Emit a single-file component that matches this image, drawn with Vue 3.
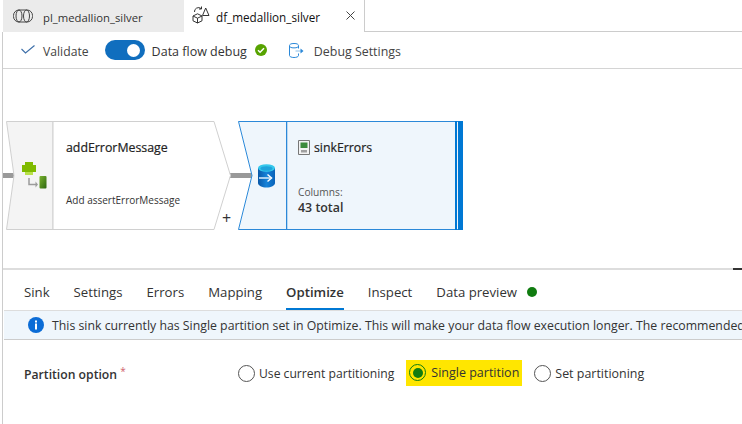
<script setup>
const tabs = [
  { name: 'Sink', active: false },
  { name: 'Settings', active: false },
  { name: 'Errors', active: false },
  { name: 'Mapping', active: false },
  { name: 'Optimize', active: true },
  { name: 'Inspect', active: false }
]
</script>

<template>
  <div class="page">
    <header class="tabbar">
      <div class="tab tab-off">
        <svg class="ticon" width="20" height="14" viewBox="0 0 20 14" fill="none" stroke="#444" stroke-width="1">
          <rect x=".5" y="1" width="19" height="12" rx="5.500" />
          <ellipse cx="6" cy="7" rx="3" ry="6" />
          <ellipse cx="13.500" cy="7" rx="3" ry="6" />
        </svg>
        <span class="tname name-off">pl_medallion_silver</span>
      </div>
      <div class="tab tab-on">
        <svg class="ticon" width="18" height="18" viewBox="0 0 18 18" fill="none" stroke="#333" stroke-width="1">
          <path d="M1 10l4.500-2.200 4.500 2.200v4.800l-4.500 2.200-4.500-2.200zM1 10l4.500 2.200 4.500-2.200M5.500 12.200v4.800" />
          <path d="M10.500 9.500l3.200-7.500 3.300 7.500z" />
          <path d="M2.500 6a4 4 0 0 1 6.500-3.500M9.500 .5v2.500h-2.500" />
        </svg>
        <span class="tname name-on">df_medallion_silver</span>
        <svg class="close" width="9" height="9" viewBox="0 0 9 9" stroke="#444" stroke-width="1">
          <path d="M.5.500l8 8M8.500 .5l-8 8" />
        </svg>
      </div>
      <div class="tab-rest"></div>
    </header>

    <div class="body">
      <div class="toolbar">
        <svg class="tool-check" width="14" height="9" viewBox="0 0 14 9" fill="none" stroke="#3c6ea8" stroke-width="1.100">
          <path d="M.5 4l4 4 9-7.500" />
        </svg>
        <span class="tool-txt validate">Validate</span>
        <span class="switch"><span class="knob"></span></span>
        <span class="tool-txt debug">Data flow debug</span>
        <svg class="ok" width="12" height="12" viewBox="0 0 12 12">
          <circle cx="6" cy="6" r="6" fill="#57a300" />
          <path d="M3 6.200l2.100 2 3.900-4" fill="none" stroke="#fff" stroke-width="1.500" />
        </svg>
        <svg class="dbicon" width="15" height="15" viewBox="0 0 15 15" fill="none" stroke="#2b88d8" stroke-width="1">
          <path d="M.5 3v9.500c0 1.200 2 2 4.500 2s4.500-.8 4.500-2v-2M9.500 5.500V3" />
          <ellipse cx="5" cy="2.700" rx="4.500" ry="2.200" />
          <path d="M6.500 8h6" stroke="#8cc0ea" />
          <path d="M11.500 5.500l3 2.500-3 2.500z" fill="#2b88d8" stroke="none" />
        </svg>
        <span class="tool-txt settings">Debug Settings</span>
      </div>

      <div class="canvas">
        <div class="link link-left"></div>
        <div class="link link-mid"></div>
        <svg class="node-svg node-a" width="226" height="109" viewBox="0 0 226 109">
          <path d="M.5.500H47V108.500H.5L8 54.500z" fill="#f4f4f4" stroke="#d0d0d0" />
          <path d="M47 .500H208L224.500 54.500 208 108.500H47z" fill="#fff" stroke="#d0d0d0" />
          <path d="M19 41h8v3h3v7h-3v3h-8v-3h-3v-7h3z" fill="#7fba00" />
          <path d="M19 51h8v3h-8z" fill="#b8e04a" />
          <path d="M23 57v6.500h7" fill="none" stroke="#9b9b9b" stroke-width="1.500" />
          <path d="M29.500 60.500l2.500 3-2.500 3z" fill="#9b9b9b" />
          <rect x="33.500" y="55" width="7" height="12.500" rx="1" fill="url(#barg)" />
          <defs>
            <linearGradient id="barg" x1="0" y1="0" x2="1" y2="1">
              <stop offset="0" stop-color="#7ab32e" />
              <stop offset="1" stop-color="#2c6510" />
            </linearGradient>
            <linearGradient id="dbg" x1="0" y1="0" x2="1" y2="0">
              <stop offset="0" stop-color="#0a58a8" />
              <stop offset=".5" stop-color="#1582d8" />
              <stop offset="1" stop-color="#0a62b8" />
            </linearGradient>
          </defs>
        </svg>
        <div class="node-label a-title">addErrorMessage</div>
        <div class="node-label a-sub">Add assertErrorMessage</div>
        <div class="plus">+</div>

        <svg class="node-svg node-b" width="226" height="109" viewBox="0 0 226 109">
          <path d="M48.500 .500H.5L14 54.500.5 108.500H48.500z" fill="#eff6fc" stroke="#2b88d8" />
          <rect x="48.500" y=".5" width="174" height="108" fill="#eff6fc" stroke="#2b88d8" />
          <path d="M49.500 1V108" stroke="#b9d8f2" stroke-width="1" />
          <rect x="217" y="0" width="2" height="109" fill="#0078d4" />
          <rect x="220" y="0" width="5" height="109" fill="#0078d4" />
          <path d="M20 47v15c0 2.500 4 4.500 8.500 4.500s8.500-2 8.500-4.500V47z" fill="url(#dbg)" />
          <ellipse cx="28.500" cy="47" rx="8.500" ry="3.800" fill="#35c8ec" />
          <ellipse cx="28.500" cy="47.500" rx="6" ry="2.300" fill="#1ea4dc" />
          <path d="M21 57h11" fill="none" stroke="#cfe6f8" stroke-width="1.600" />
          <path d="M29.500 53.500l4 3.500-4 3.500" fill="none" stroke="#fff" stroke-width="1.500" />
        </svg>
        <svg class="csv" width="12" height="15" viewBox="0 0 12 15">
          <path d="M.5.500h11v14H.5z" fill="#f3f3f3" stroke="#777" />
          <rect x="2.500" y="2.500" width="7" height="5.500" fill="#3d8b3d" />
          <rect x="3" y="10" width="6" height="2.500" fill="#a0a0a0" />
        </svg>
        <div class="node-label b-title">sinkErrors</div>
        <div class="node-label b-cols">Columns:</div>
        <div class="node-label b-total">43 total</div>
      </div>

      <div class="panel">
        <nav class="ptabs">
          <span v-for="t in tabs" :key="t.name" class="ptab" :class="{ active: t.active }">{{ t.name }}</span>
          <span class="ptab preview">Data preview<i class="dot"></i></span>
        </nav>
        <div class="banner">
          <svg class="info" width="16" height="16" viewBox="0 0 16 16">
            <circle cx="8" cy="8" r="8" fill="#0b6cd6" />
            <rect x="7" y="6.500" width="2" height="6" fill="#fff" />
            <rect x="7" y="3.500" width="2" height="2" fill="#fff" />
          </svg>
          <span class="btxt">This sink currently has Single partition set in Optimize. This will make your data flow execution longer. The recommended</span>
        </div>
        <div class="field">
          <label class="flabel">Partition option <em>*</em></label>
          <div class="radios">
            <span class="radio r1"><i class="circle"></i>Use current partitioning</span>
            <span class="radio r2"><i class="circle on"></i>Single partition</span>
            <span class="radio r3"><i class="circle"></i>Set partitioning</span>
          </div>
        </div>
      </div>
    </div>
  </div>
</template>

<style>
html, body { margin: 0; padding: 0; overflow: hidden; background: #fff; }
</style>

<style scoped>
.page {
  width: 742px;
  height: 424px;
  overflow: hidden;
  font-family: "Open Sans", "Noto Sans", sans-serif;
  font-size: 13px;
  color: #333;
  background: #fff;
}
.tabbar { display: flex; height: 32px; }
.tab { display: flex; align-items: center; box-sizing: border-box; height: 32px; }
.tab-off { width: 184px; background: #ebebeb; padding-left: 10px; border-left: 3px solid #fff; }
.tab-on { width: 181px; padding-left: 8px; border-right: 1px solid #ccc; position: relative; }
.tab-rest { flex: 1; border-bottom: 1px solid #ccc; }
.ticon { flex: none; margin-right: 10px; }
.tab-on .ticon { margin-right: 6px; margin-top: -3px; }
.tname { font-size: 11.300px; color: #222; margin-top: 2px; }
.name-off { color: #333; }
.name-on { font-size: 11.700px; font-weight: 500; color: #111; }
.close { position: absolute; right: 9px; top: 11px; }
.body { margin-left: 2px; border-left: 1px solid #ccc; height: 392px; }
.toolbar { display: flex; align-items: center; height: 36px; border-bottom: 1px solid #d4d4d4; padding-left: 18px; }
.tool-check { margin-right: 8px; margin-top: -2px; flex: none; }
.tool-txt { font-size: 12.500px; color: #444; margin-top: 2px; }
.validate { font-size: 12.200px; margin-right: 16px; }
.switch { width: 40px; height: 20px; border-radius: 10px; background: #106ebe; position: relative; margin-right: 7px; flex: none; }
.knob { position: absolute; right: 5px; top: 3.500px; width: 13px; height: 13px; border-radius: 50%; background: #fff; }
.debug { color: #333; }
.ok { margin-left: 8px; margin-right: 22px; flex: none; }
.dbicon { margin-right: 10px; flex: none; }
.settings { font-size: 12.400px; }
.canvas { position: relative; height: 199px; border-bottom: 2px solid #ddd; }
.canvas::after { content: ""; position: absolute; right: 0; bottom: -2px; width: 9px; height: 2px; background: #333; }
.link { position: absolute; height: 5px; background: #999; top: 104px; }
.link-left { left: 0; width: 15px; }
.link-mid { left: 225px; width: 28px; }
.node-svg { position: absolute; }
.node-a { left: 3px; top: 52px; }
.node-b { left: 235px; top: 52px; }
.node-label { position: absolute; white-space: nowrap; }
.a-title { left: 63px; top: 70px; font-size: 12.350px; color: #222; -webkit-text-stroke: 0.2px #222; }
.a-sub { left: 63px; top: 124px; font-size: 10px; color: #333; }
.plus { position: absolute; left: 219px; top: 138px; font-size: 16px; color: #333; }
.csv { position: absolute; left: 295px; top: 71px; }
.b-title { left: 311px; top: 70px; font-size: 12.300px; color: #222; -webkit-text-stroke: 0.2px #222; }
.b-cols { left: 295px; top: 116px; font-size: 10.200px; color: #555; }
.b-total { left: 295px; top: 130px; font-size: 12.400px; font-weight: 600; }
.ptabs { display: flex; height: 40px; box-sizing: border-box; padding-left: 21px; gap: 24px; }
.ptab { display: flex; align-items: center; font-size: 13.200px; color: #333; border-bottom: 2px solid transparent; padding-top: 5px; height: 40px; box-sizing: border-box; }
.ptab.active { font-weight: 600; border-bottom-color: #0078d4; }
.dot { display: inline-block; width: 10px; height: 10px; border-radius: 50%; background: #107c10; margin-left: 10px; }
.banner { display: flex; align-items: center; height: 30px; box-sizing: border-box; margin-left: 1px; padding-left: 24px; background: #eff6fc; border-top: 1px solid #ddd; border-bottom: 1px solid #ccc; white-space: nowrap; overflow: hidden; }
.info { flex: none; }
.btxt { font-size: 12.300px; margin-left: 8px; color: #333; }
.field { display: flex; align-items: center; padding-left: 21px; height: 66px; }
.flabel { font-size: 12.200px; font-weight: 600; width: 214px; flex: none; }
.flabel em { color: #d0606c; font-style: normal; font-weight: 400; font-size: 10px; vertical-align: 4px; }
.radios { display: flex; align-items: center; }
.radio { display: flex; align-items: center; font-size: 12.150px; color: #333; }
.circle { width: 15px; height: 15px; border: 1px solid #555; border-radius: 50%; margin-right: 4px; position: relative; display: block; flex: none; }
.circle.on { border-color: #107c10; }
.circle.on::after { content: ""; position: absolute; left: 2.500px; top: 2.500px; width: 10px; height: 10px; border-radius: 50%; background: #107c10; }
.r2 { background: #ffe600; margin: 0 12px 1px; padding: 4px 3px; height: 18px; font-size: 12.500px; }
.r2 .circle { margin-right: 5px; }
.r3 { font-size: 12.450px; }
</style>
